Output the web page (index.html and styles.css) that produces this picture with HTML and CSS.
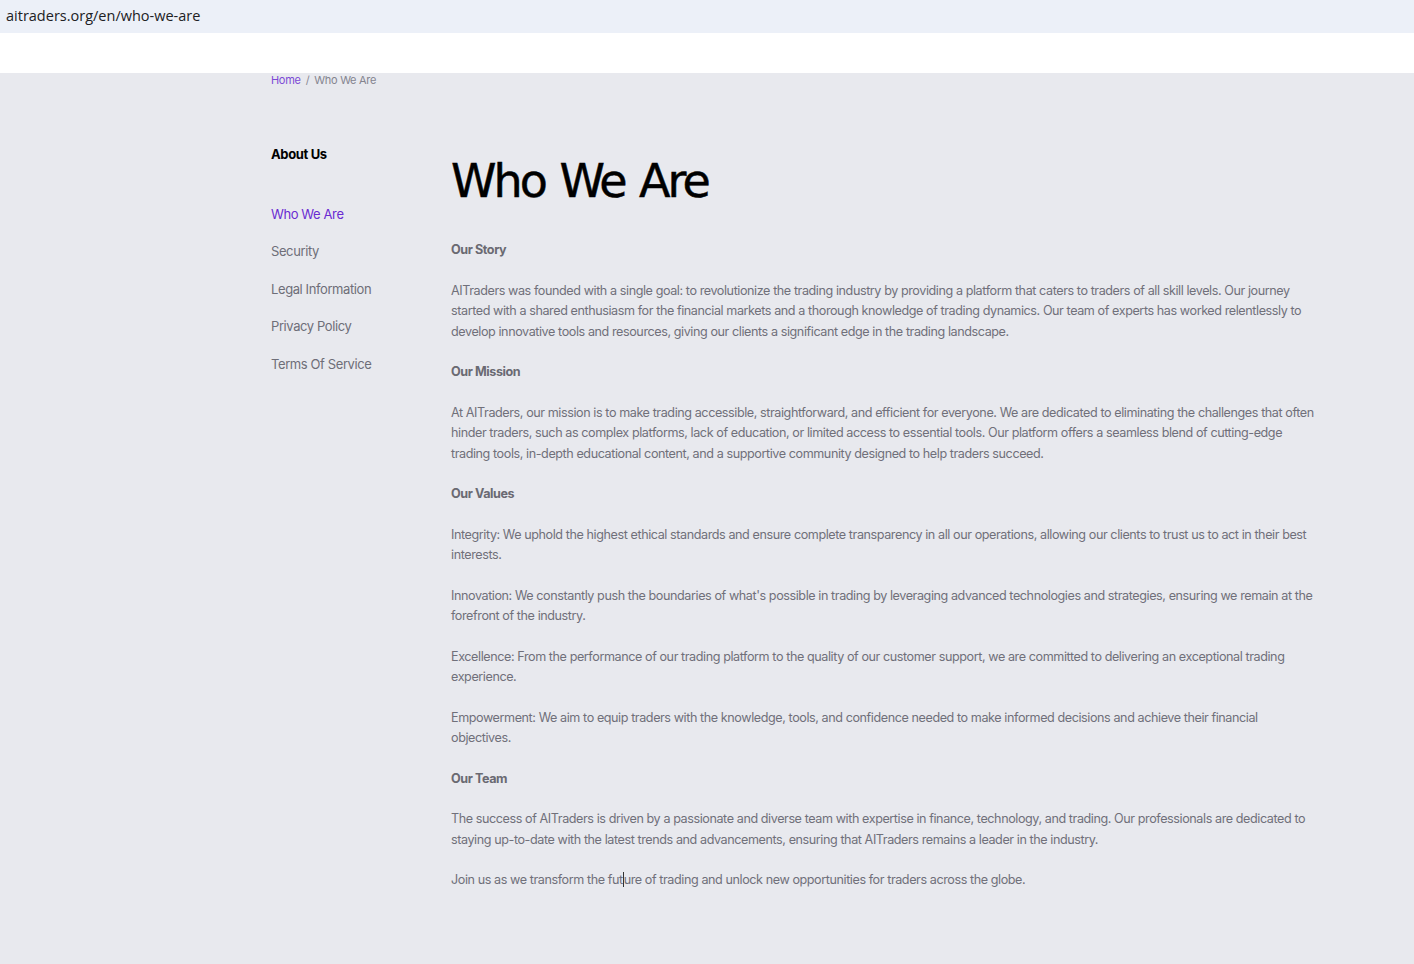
FILE: index.html
```html
<!DOCTYPE html>
<html lang="en">
<head>
<meta charset="utf-8">
<title>Who We Are</title>
<link rel="stylesheet" href="styles.css">
</head>
<body>
<div class="addressbar">aitraders.org/en/who-we-are</div>
<div class="topband"></div>
<div class="page">
  <div class="container">
    <nav class="breadcrumb"><a class="crumb-link" href="#">Home</a><span class="sep">/</span><span class="crumb-current">Who We Are</span></nav>
    <div class="layout">
      <aside class="sidebar">
        <div class="side-title">About Us</div>
        <ul class="side-list">
          <li><a class="side-link active" href="#">Who We Are</a></li>
          <li><a class="side-link" href="#">Security</a></li>
          <li><a class="side-link" href="#">Legal Information</a></li>
          <li><a class="side-link" href="#">Privacy Policy</a></li>
          <li><a class="side-link" href="#">Terms Of Service</a></li>
        </ul>
      </aside>
      <main class="content">
        <h1 class="title">Who We Are</h1>
        <p class="sub">Our Story</p>
        <p>AITraders was founded with a single goal: to revolutionize the trading industry by providing a platform that caters to traders of all skill levels. Our journey started with a shared enthusiasm for the financial markets and a thorough knowledge of trading dynamics. Our team of experts has worked relentlessly to develop innovative tools and resources, giving our clients a significant edge in the trading landscape.</p>
        <p class="sub">Our Mission</p>
        <p>At AITraders, our mission is to make trading accessible, straightforward, and efficient for everyone. We are dedicated to eliminating the challenges that often hinder traders, such as complex platforms, lack of education, or limited access to essential tools. Our platform offers a seamless blend of cutting-edge trading tools, in-depth educational content, and a supportive community designed to help traders succeed.</p>
        <p class="sub">Our Values</p>
        <p>Integrity: We uphold the highest ethical standards and ensure complete transparency in all our operations, allowing our clients to trust us to act in their best interests.</p>
        <p>Innovation: We constantly push the boundaries of what's possible in trading by leveraging advanced technologies and strategies, ensuring we remain at the forefront of the industry.</p>
        <p>Excellence: From the performance of our trading platform to the quality of our customer support, we are committed to delivering an exceptional trading experience.</p>
        <p>Empowerment: We aim to equip traders with the knowledge, tools, and confidence needed to make informed decisions and achieve their financial objectives.</p>
        <p class="sub">Our Team</p>
        <p>The success of AITraders is driven by a passionate and diverse team with expertise in finance, technology, and trading. Our professionals are dedicated to staying up-to-date with the latest trends and advancements, ensuring that AITraders remains a leader in the industry.</p>
        <p>Join us as we transform the fut<span class="caret"></span>ure of trading and unlock new opportunities for traders across the globe.</p>
      </main>
    </div>
  </div>
</div>
</body>
</html>
```
FILE: styles.css
```css
* { box-sizing: border-box; }
html, body { margin: 0; padding: 0; }
body {
  background: #e8e9ee;
  font-family: Inter, "Liberation Sans", sans-serif;
  min-height: 964px;
}
.addressbar {
  height: 33px;
  background: #ecf0f8;
  color: #202124;
  font-family: "Open Sans", "Noto Sans", sans-serif;
  font-size: 14.5px;
  line-height: 32px;
  padding-left: 6px;
}
.topband {
  height: 40px;
  background: #ffffff;
}
.page {
  background: #e8e9ee;
}
.container {
  width: 1060px;
  margin-left: 271px;
}
.breadcrumb {
  font-size: 11px;
  line-height: 14px;
  letter-spacing: -0.3px;
  display: flex;
  gap: 5px;
}
.crumb-link { color: #7c4ad6; text-decoration: none; }
.sep { color: #8a8a94; }
.crumb-current { color: #84848e; }
.layout {
  display: flex;
  padding-top: 57px;
}
.sidebar {
  width: 180px;
  flex: none;
}
.side-title {
  font-size: 13px;
  font-weight: 700;
  color: #000;
  line-height: 20px;
  letter-spacing: -0.35px;
}
.side-list {
  list-style: none;
  margin: 39px 0 0;
  padding: 0;
  display: flex;
  flex-direction: column;
  gap: 17.4px;
}
.side-list li {
  line-height: 20px;
  height: 20px;
}
.side-link {
  font-size: 13px;
  line-height: 20px;
  color: #6e6e78;
  text-decoration: none;
  letter-spacing: -0.4px;
}
.side-link.active { color: #6a2bd2; }
.content {
  width: 866px;
  padding-top: 9px;
}
.title {
  font-family: "DejaVu Sans", sans-serif;
  font-weight: 400;
  font-size: 46px;
  line-height: 56px;
  color: #000;
  margin: 0 0 31px;
  letter-spacing: -3px;
  word-spacing: 3px;
  -webkit-text-stroke: 0.5px #000;
}
.content p {
  margin: 0 0 20px;
  font-size: 12.6px;
  line-height: 20.5px;
  color: #70707a;
  letter-spacing: -0.42px;
}
.content p.sub {
  font-weight: 700;
  color: #6a6a72;
}
.caret {
  display: inline-block;
  width: 1px;
  height: 15px;
  background: #333;
  vertical-align: -3px;
}
```
